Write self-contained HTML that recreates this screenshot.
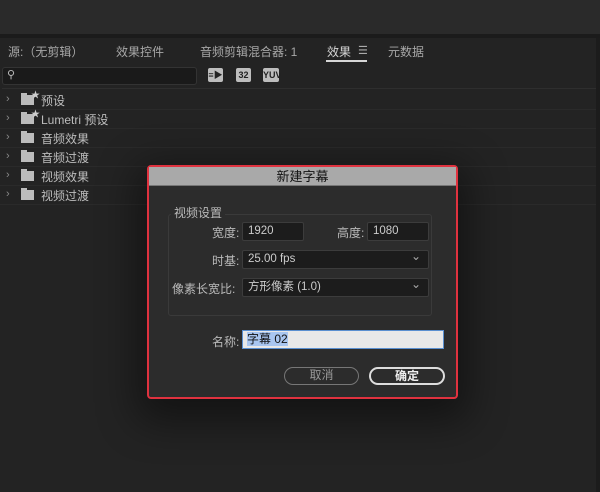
<!DOCTYPE html>
<html><head><meta charset="utf-8"><style>
*{margin:0;padding:0;box-sizing:border-box}
body{width:600px;height:492px;background:#232323;font-family:"Liberation Sans","Noto Sans CJK SC",sans-serif;font-size:12px;color:#bdbdbd;position:relative;overflow:hidden}
.a{position:absolute}
.top{left:0;top:0;width:600px;height:34px;background:#2a2a2a}
.sep{left:0;top:34px;width:600px;height:4px;background:#1b1b1b}
.rs{left:596px;top:38px;width:4px;height:454px;background:#1c1c1c}
.tab{top:43px;color:#a8a8a8;font-size:12px}
.row{left:0;width:596px;height:19px;border-bottom:1px solid #2a2a2a}
.row .chev{position:absolute;left:6px;top:2px;color:#888;font-size:11px}
.row .fold{position:absolute;left:21px;top:4px;width:13px;height:10px;background:#bcbcbc}
.row .fold:before{content:"";position:absolute;left:0;top:-2px;width:6px;height:2px;background:#bcbcbc}
.row .t{position:absolute;left:41px;top:1px;color:#bdbdbd}
.ic{top:68px;height:14px;background:#bdbdbd;color:#232323;font-size:9px;font-weight:bold;text-align:center;line-height:14px;border-radius:2px}
.dlg{left:147px;top:165px;width:311px;height:234px;border:2px solid #e0323f;border-radius:4px;background:#2c2c2c;box-shadow:0 12px 40px 10px rgba(0,0,0,.45)}
.tb{left:0;top:0;width:307px;height:19px;background:#a9a9a9;border-bottom:1px solid #777;text-align:center;color:#111;font-size:13px;line-height:19px}
.grp{left:19px;top:47px;width:264px;height:102px;border:1px solid #3a3a3a;border-radius:3px}
.lbl{color:#bbb;font-size:12px}
.in{background:#1c1c1c;border:1px solid #3c3c3c;border-radius:2px;height:19px;color:#ccc;line-height:17px;padding-left:5px;font-size:11.5px}
.dd:after{content:"⌄";position:absolute;right:7px;top:-3px;color:#aaa;font-size:12px}
.btn{height:18px;border-radius:9px;text-align:center;line-height:15px;font-size:12px}
</style></head><body>
<div class="a top"></div><div class="a sep"></div><div class="a rs"></div>
<div class="a tab" style="left:8px">源:（无剪辑）</div>
<div class="a tab" style="left:116px">效果控件</div>
<div class="a tab" style="left:200px">音频剪辑混合器: 1</div>
<div class="a tab" style="left:327px;color:#d6d6d6">效果</div>
<div class="a" style="left:358px;top:44px;color:#aaa;font-size:11px">☰</div>
<div class="a" style="left:326px;top:60px;width:41px;height:2px;background:#d6d6d6"></div>
<div class="a tab" style="left:388px">元数据</div>
<div class="a" style="left:2px;top:67px;width:195px;height:18px;background:#1a1a1a;border:1px solid #333;border-radius:3px"></div>
<div class="a" style="left:7px;top:68px;color:#bbb;font-size:11px">⚲</div>
<div class="a ic" style="left:208px;width:15px">≡▶</div>
<div class="a ic" style="left:236px;width:15px">32</div>
<div class="a ic" style="left:263px;width:16px">YUV</div>
<div class="a" style="left:2px;top:88px;width:594px;height:1px;background:#2e2e2e"></div>
<div class="a row" style="top:91px"><span class="chev">›</span><span class="fold"></span><span class="a" style="left:31px;top:-3px;font-size:9px;color:#ccc">★</span><span class="t">预设</span></div>
<div class="a row" style="top:110px"><span class="chev">›</span><span class="fold"></span><span class="a" style="left:31px;top:-3px;font-size:9px;color:#ccc">★</span><span class="t">Lumetri 预设</span></div>
<div class="a row" style="top:129px"><span class="chev">›</span><span class="fold"></span><span class="t">音频效果</span></div>
<div class="a row" style="top:148px"><span class="chev">›</span><span class="fold"></span><span class="t">音频过渡</span></div>
<div class="a row" style="top:167px"><span class="chev">›</span><span class="fold"></span><span class="t">视频效果</span></div>
<div class="a row" style="top:186px"><span class="chev">›</span><span class="fold"></span><span class="t">视频过渡</span></div>

<div class="a dlg">
<div class="a tb">新建字幕</div>
<div class="a grp"></div>
<div class="a lbl" style="left:22px;top:37px;background:#2c2c2c;padding:0 3px">视频设置</div>
<div class="a lbl" style="left:63px;top:57px">宽度:</div>
<div class="a in" style="left:93px;top:55px;width:62px">1920</div>
<div class="a lbl" style="left:188px;top:57px">高度:</div>
<div class="a in" style="left:218px;top:55px;width:62px">1080</div>
<div class="a lbl" style="left:63px;top:85px">时基:</div>
<div class="a in dd" style="left:93px;top:83px;width:187px">25.00 fps</div>
<div class="a lbl" style="left:23px;top:113px">像素长宽比:</div>
<div class="a in dd" style="left:93px;top:111px;width:187px">方形像素 (1.0)</div>
<div class="a lbl" style="left:63px;top:166px">名称:</div>
<div class="a" style="left:93px;top:163px;width:202px;height:19px;background:#e8e8e8;border:1px solid #5a8fd0;padding:1px 4px"><span style="background:#a9c6f0;color:#111;font-size:12px;line-height:15px">字幕 02</span></div>
<div class="a btn" style="left:135px;top:200px;width:75px;border:1px solid #777;color:#999">取消</div>
<div class="a btn" style="left:220px;top:200px;width:76px;border:2px solid #ddd;color:#eee;font-weight:bold">确定</div>
</div>
</body></html>
